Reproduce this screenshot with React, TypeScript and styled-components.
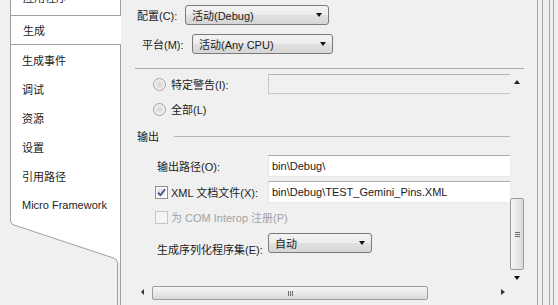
import React, { FC } from "react";
import styled, { createGlobalStyle } from "styled-components";

const GlobalStyle = createGlobalStyle`
  html, body {
    margin: 0;
    padding: 0;
    background: #f0f0f0;
  }
  body {
    font-family: "Liberation Sans", "Noto Sans CJK SC", sans-serif;
    font-size: 11px;
    color: #1b1b1b;
  }
`;

const BORDER = "#a0a0a0";

const navItems = ["生成事件", "调试", "资源", "设置", "引用路径", "Micro Framework"];

const App: FC = () => {
  return (
    <>
      <GlobalStyle />
      <SWindow>
        <SNav>
          <STopTab>应用程序</STopTab>
          <SSelectedTab>生成</SSelectedTab>
          <SNavList>
            {navItems.map((item) => (
              <SNavItem key={item}>{item}</SNavItem>
            ))}
          </SNavList>
          <SNavFoot width="111" height="86" viewBox="0 0 111 86">
            <path d="M0 0 H110 V44 H107.5 Q107.5 40 103.5 39 L4 6 Q0.5 5 0.5 2 Z" fill="#fff" />
            <path
              d="M0.5 0 V2 Q0.5 5 4 6 L103.5 39 Q107.5 40.5 107.5 44 V86"
              fill="none"
              stroke={BORDER}
            />
            <path d="M110.5 0 V86" stroke={BORDER} />
          </SNavFoot>
        </SNav>

        <SMain>
          <STopArea>
            <SFormRow>
              <SLabel w={48} indent={2}>配置(C):</SLabel>
              <Combo w={144} value="活动(Debug)" />
            </SFormRow>
            <SFormRow>
              <SLabel w={50} indent={7}>平台(M):</SLabel>
              <Combo w={141} value="活动(Any CPU)" />
            </SFormRow>
          </STopArea>
          <SSeparator />

          <SScrollPanel>
            <SViewport>
              <SOptionRow h={20}>
                <SRadio />
                <SOptionText>特定警告(I):</SOptionText>
                <STextBox disabled />
              </SOptionRow>
              <SOptionRow h={20} top={5}>
                <SRadio />
                <SOptionText>全部(L)</SOptionText>
              </SOptionRow>

              <SGroupHeader>
                <span>输出</span>
                <SGroupLine />
              </SGroupHeader>

              <SFieldRow top={11}>
                <SFieldLabel>输出路径(O):</SFieldLabel>
                <STextBox>bin\Debug\</STextBox>
              </SFieldRow>
              <SOptionRow h={22} top={4}>
                <CheckBox checked />
                <SOptionText>XML 文档文件(X):</SOptionText>
                <STextBox>bin\Debug\TEST_Gemini_Pins.XML</STextBox>
              </SOptionRow>
              <SOptionRow h={16} top={6}>
                <CheckBox disabled />
                <SOptionText disabled>为 COM Interop 注册(P)</SOptionText>
              </SOptionRow>
              <SFieldRow top={8} h={20}>
                <SFieldLabel low>生成序列化程序集(E):</SFieldLabel>
                <Combo w={104} value="自动" />
              </SFieldRow>
            </SViewport>

            <SVScroll>
              <SVButton h={24}>
                <SArrowUp />
              </SVButton>
              <SVTrack>
                <SVThumb>
                  <SGripH />
                </SVThumb>
              </SVTrack>
              <SVButton h={11}>
                <SArrowDown />
              </SVButton>
            </SVScroll>

            <SHScroll>
              <SHButton>
                <SArrowLeft />
              </SHButton>
              <SHTrack>
                <SHThumb>
                  <SGripV />
                </SHThumb>
              </SHTrack>
              <SHButton>
                <SArrowRight />
              </SHButton>
            </SHScroll>
            <SCorner />
          </SScrollPanel>
        </SMain>

        <SRightFrame>
          <SRail w={6} />
          <SRail w={5} />
        </SRightFrame>
      </SWindow>
    </>
  );
};

type ComboProps = { w: number; value: string };

const Combo: FC<ComboProps> = ({ w, value }) => (
  <SCombo w={w}>
    <span>{value}</span>
    <SArrowDown />
  </SCombo>
);

type CheckProps = { checked?: boolean; disabled?: boolean };

const CheckBox: FC<CheckProps> = ({ checked = false, disabled = false }) => (
  <SCheckSvg width="13" height="13" viewBox="0 0 13 13">
    <defs>
      <linearGradient id="cbfill" x1="0" y1="0" x2="1" y2="1">
        <stop offset="0" stopColor="#dcdcdc" />
        <stop offset="1" stopColor="#fbfbfb" />
      </linearGradient>
    </defs>
    <rect
      x="0.5"
      y="0.5"
      width="12"
      height="12"
      fill={disabled ? "#f4f4f4" : "#fff"}
      stroke={disabled ? "#c6c6c6" : "#8e8f8f"}
    />
    {!disabled && <rect x="2.5" y="2.5" width="8" height="8" fill="url(#cbfill)" />}
    {checked && (
      <path d="M3 6.6 L5.4 9.2 L10 3.4" fill="none" stroke="#3d5189" strokeWidth="1.7" />
    )}
  </SCheckSvg>
);

// Style
const SWindow = styled.div`
  display: flex;
  width: 558px;
  height: 305px;
  overflow: hidden;
  background: #f0f0f0;
`;

const SNav = styled.div`
  display: flex;
  flex-direction: column;
  flex-shrink: 0;
  width: 111px;
  padding-left: 10px;
`;

const STopTab = styled.div`
  box-sizing: border-box;
  height: 28px;
  margin-top: -12px;
  padding: 2px 0 0 12px;
  background: #fff;
  border: 1px solid ${BORDER};
  border-top: none;
  line-height: 16px;
`;

const SSelectedTab = styled.div`
  box-sizing: border-box;
  height: 29px;
  padding: 6px 0 0 12px;
  background: #fff;
  border-left: 1px solid ${BORDER};
  border-bottom: 1px solid ${BORDER};
  line-height: 18px;
`;

const SNavList = styled.div`
  display: flex;
  flex-direction: column;
  background: #fff;
  border-left: 1px solid ${BORDER};
  border-right: 1px solid ${BORDER};
`;

const SNavItem = styled.div`
  display: flex;
  align-items: center;
  height: 29px;
  padding-left: 11px;
  white-space: nowrap;
`;

const SNavFoot = styled.svg`
  display: block;
  flex-shrink: 0;
`;

const SMain = styled.div`
  display: flex;
  flex-direction: column;
  flex-shrink: 0;
  width: 389px;
  padding-left: 14px;
`;

const STopArea = styled.div`
  display: flex;
  flex-direction: column;
  gap: 9px;
  height: 63px;
  padding-top: 5px;
`;

const SFormRow = styled.div`
  display: flex;
  align-items: center;
  height: 20px;
`;

const SLabel = styled.span<{ w: number; indent: number }>`
  flex-shrink: 0;
  width: ${(p) => p.w}px;
  margin-left: ${(p) => p.indent}px;
  white-space: nowrap;
`;

const SCombo = styled.div<{ w: number }>`
  box-sizing: border-box;
  flex-shrink: 0;
  display: flex;
  align-items: center;
  justify-content: space-between;
  width: ${(p) => p.w}px;
  height: 20px;
  padding: 0 6px 0 6px;
  border: 1px solid #7a7a7a;
  border-radius: 3px;
  background: linear-gradient(#f3f3f3 0%, #ececec 48%, #e0e0e0 52%, #d6d6d6 100%);
  white-space: nowrap;
`;

const SArrowDown = styled.i`
  width: 0;
  height: 0;
  border-left: 3.5px solid transparent;
  border-right: 3.5px solid transparent;
  border-top: 4px solid #111;
`;

const SArrowUp = styled.i`
  width: 0;
  height: 0;
  border-left: 3.5px solid transparent;
  border-right: 3.5px solid transparent;
  border-bottom: 4px solid #222;
`;

const SArrowLeft = styled.i`
  width: 0;
  height: 0;
  border-top: 3px solid transparent;
  border-bottom: 3px solid transparent;
  border-right: 3px solid #333;
`;

const SArrowRight = styled.i`
  width: 0;
  height: 0;
  border-top: 3.5px solid transparent;
  border-bottom: 3.5px solid transparent;
  border-left: 4px solid #333;
`;

const SSeparator = styled.div`
  height: 1px;
  background: #a9a9a9;
  margin-bottom: 1px;
`;

const SScrollPanel = styled.div`
  display: grid;
  grid-template-columns: 375px 14px;
  grid-template-rows: 213px 17px;
`;

const SViewport = styled.div`
  display: flex;
  flex-direction: column;
  overflow: hidden;
  padding-top: 4px;
`;

const SOptionRow = styled.div<{ h: number; top?: number }>`
  display: flex;
  align-items: center;
  flex-shrink: 0;
  height: ${(p) => p.h}px;
  margin-top: ${(p) => p.top ?? 0}px;
  padding-left: 18px;
  white-space: nowrap;
`;

const SOptionText = styled.span<{ disabled?: boolean }>`
  flex-shrink: 0;
  width: 97px;
  margin-left: 5px;
  color: ${(p) => (p.disabled ? "#a3a3a3" : "inherit")};
`;

const SRadio = styled.i`
  box-sizing: border-box;
  flex-shrink: 0;
  width: 13px;
  height: 13px;
  border: 1px solid #a2a2a2;
  border-radius: 50%;
  background: radial-gradient(circle at 50% 50%, #d6d6d6 0%, #e4e4e4 40%, #f7f7f7 75%);
`;

const STextBox = styled.div<{ disabled?: boolean }>`
  box-sizing: border-box;
  flex-shrink: 0;
  width: 250px;
  height: 100%;
  display: flex;
  align-items: center;
  padding-left: 3px;
  background: ${(p) => (p.disabled ? "#f0f0f0" : "#fff")};
  border: 1px solid;
  border-right: none;
  border-color: ${(p) =>
    p.disabled ? "#b4b4b4 #c8c8c8 #c8c8c8 #c8c8c8" : "#abadb3 #dbdfe6 #e3e9ef #e2e3ea"};
  white-space: nowrap;
`;

const SGroupHeader = styled.div`
  display: flex;
  align-items: center;
  flex-shrink: 0;
  height: 16px;
  margin-top: 9px;
  padding-left: 2px;
`;

const SGroupLine = styled.div`
  flex: 1;
  height: 1px;
  margin-left: 15px;
  background: #b3b3b3;
`;

const SFieldRow = styled.div<{ top?: number; h?: number }>`
  display: flex;
  align-items: center;
  flex-shrink: 0;
  height: ${(p) => p.h ?? 22}px;
  margin-top: ${(p) => p.top ?? 0}px;
  padding-left: 22px;
  white-space: nowrap;
`;

const SFieldLabel = styled.span<{ low?: boolean }>`
  flex-shrink: 0;
  width: 111px;
  padding-top: ${(p) => (p.low ? 12 : 0)}px;
`;

const SCheckSvg = styled.svg`
  display: block;
  flex-shrink: 0;
  margin-left: 2px;
  margin-right: -2px;
`;

const SVScroll = styled.div`
  display: flex;
  flex-direction: column;
`;

const SVButton = styled.div<{ h: number }>`
  display: flex;
  align-items: center;
  justify-content: center;
  height: ${(p) => p.h}px;
`;

const SVTrack = styled.div`
  flex: 1;
  padding-top: 104px;
`;

const SVThumb = styled.div`
  box-sizing: border-box;
  display: flex;
  align-items: center;
  justify-content: center;
  height: 72px;
  border: 1px solid #9b9b9b;
  border-radius: 2px;
  background: linear-gradient(90deg, #f5f5f5 0%, #e9e9e9 50%, #d9d9d9 100%);
`;

const SGripH = styled.i`
  width: 5px;
  height: 5px;
  background: repeating-linear-gradient(#6e6e6e 0 1px, transparent 1px 2px);
`;

const SHScroll = styled.div`
  display: flex;
  align-items: stretch;
`;

const SHButton = styled.div`
  display: flex;
  align-items: center;
  justify-content: center;
  width: 15px;
`;

const SHTrack = styled.div`
  flex: 1;
  display: flex;
  padding: 3px 0 0 2px;
`;

const SHThumb = styled.div`
  box-sizing: border-box;
  display: flex;
  align-items: center;
  justify-content: center;
  width: 276px;
  border: 1px solid #9b9b9b;
  border-radius: 2px;
  background: linear-gradient(#f5f5f5 0%, #e9e9e9 50%, #d9d9d9 100%);
`;

const SGripV = styled.i`
  width: 5px;
  height: 5px;
  background: repeating-linear-gradient(90deg, #6e6e6e 0 1px, transparent 1px 2px);
`;

const SCorner = styled.div`
  background: #f0f0f0;
`;

const SRightFrame = styled.div`
  display: flex;
  gap: 6px;
  flex-shrink: 0;
  padding-left: 13px;
`;

const SRail = styled.div<{ w: number }>`
  box-sizing: border-box;
  width: ${(p) => p.w}px;
  height: 305px;
  border-left: 1px solid #a8a8a8;
  border-right: 1px solid #a8a8a8;
`;

export default App;
